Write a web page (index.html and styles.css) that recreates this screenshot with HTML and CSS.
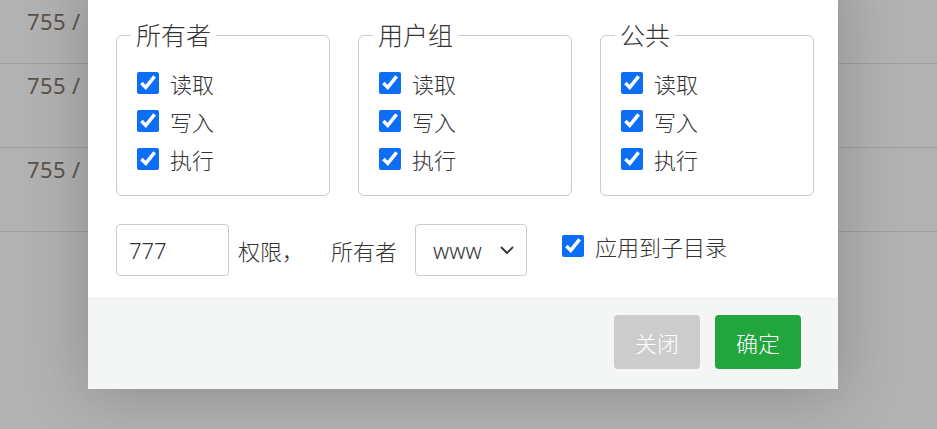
FILE: index.html
```html
<!DOCTYPE html>
<html lang="zh-CN">
<head>
    <meta charset="UTF-8">
    <title>权限设置</title>
    <link rel="stylesheet" href="styles.css">
</head>
<body>
    <div class="file-list">
        <div class="file-row">755 /</div>
        <div class="file-row">755 /</div>
        <div class="file-row">755 /</div>
    </div>
    <div class="mask"></div>

    <div class="modal">
        <div class="modal-body">
            <div class="perm-groups">
                <fieldset class="perm-box">
                    <legend>所有者</legend>
                    <label class="check"><input type="checkbox" checked><span>读取</span></label>
                    <label class="check"><input type="checkbox" checked><span>写入</span></label>
                    <label class="check"><input type="checkbox" checked><span>执行</span></label>
                </fieldset>
                <fieldset class="perm-box">
                    <legend>用户组</legend>
                    <label class="check"><input type="checkbox" checked><span>读取</span></label>
                    <label class="check"><input type="checkbox" checked><span>写入</span></label>
                    <label class="check"><input type="checkbox" checked><span>执行</span></label>
                </fieldset>
                <fieldset class="perm-box">
                    <legend>公共</legend>
                    <label class="check"><input type="checkbox" checked><span>读取</span></label>
                    <label class="check"><input type="checkbox" checked><span>写入</span></label>
                    <label class="check"><input type="checkbox" checked><span>执行</span></label>
                </fieldset>
            </div>
            <div class="perm-line">
                <input type="text" class="mode-input" value="777">
                <span class="perm-text">权限，</span>
                <span class="owner-text">所有者</span>
                <div class="owner-select">
                    <span>www</span>
                    <svg width="14" height="9" viewBox="0 0 14 9"><path d="M1.5 1.5 L7 7 L12.5 1.5" fill="none" stroke="#333" stroke-width="1.8" stroke-linecap="round" stroke-linejoin="round"/></svg>
                </div>
                <label class="check sub-dir"><input type="checkbox" checked><span>应用到子目录</span></label>
            </div>
        </div>
        <div class="modal-footer">
            <button class="btn btn-close">关闭</button>
            <button class="btn btn-ok">确定</button>
        </div>
    </div>
</body>
</html>
```
FILE: styles.css
```css
body {
    margin: 0;
    width: 937px;
    height: 429px;
    overflow: hidden;
    position: relative;
    background: #fff;
    font-family: "Noto Sans", "Noto Sans CJK SC", sans-serif;
    font-weight: 300;
    color: #333;
}

.file-row {
    height: 84px;
    border-bottom: 1px solid #e4e4e4;
    box-sizing: border-box;
    padding: 5px 0 0 27px;
    font-size: 22px;
    font-weight: 400;
    letter-spacing: 0.4px;
    line-height: 32px;
    color: #85796e;
    white-space: nowrap;
}

.file-row:first-child {
    height: 64px;
    padding-top: 5px;
}

.mask {
    position: absolute;
    top: 0; left: 0; right: 0; bottom: 0;
    background: rgba(0, 0, 0, 0.3);
}

.modal {
    position: absolute;
    left: 88px;
    top: -30px;
    width: 750px;
    height: 419px;
    background: #fff;
    box-shadow: 0 4px 60px rgba(0, 0, 0, 0.22);
    display: flex;
    flex-direction: column;
}

.modal-body {
    flex: 1;
    padding: 49px 28px 0 28px;
}

.perm-groups {
    display: flex;
    gap: 28px;
}

.perm-box {
    flex: 0 0 214px;
    width: 214px;
    min-width: 0;
    box-sizing: border-box;
    margin: 0;
    padding: 13px 20px 17px 20px;
    border: 1px solid #cccccc;
    border-radius: 6px;
    display: flex;
    flex-direction: column;
}

.perm-box legend {
    font-size: 25px;
    line-height: 32px;
    padding: 0 5px;
    margin-left: -6px;
    color: #333;
}

.check {
    display: flex;
    align-items: center;
    height: 38px;
    font-size: 22px;
    color: #333;
}

.check input {
    width: 22px;
    height: 22px;
    margin: 0 11px 0 0;
    accent-color: #0b6ef5;
}

.perm-line {
    display: flex;
    align-items: center;
    margin-top: 28px;
    height: 52px;
}

.mode-input {
    width: 113px;
    height: 52px;
    box-sizing: border-box;
    border: 1px solid #cccccc;
    border-radius: 4px;
    padding: 0 12px;
    font-family: "Noto Sans", sans-serif;
    font-weight: 300;
    font-size: 22px;
    color: #333;
    outline: none;
}

.perm-text {
    font-size: 22px;
    margin-left: 9px;
}

.owner-text {
    font-size: 22px;
    margin-left: 27px;
}

.owner-select {
    width: 112px;
    height: 52px;
    box-sizing: border-box;
    border: 1px solid #cccccc;
    border-radius: 4px;
    margin-left: 18px;
    padding: 0 12px 0 17px;
    display: flex;
    align-items: center;
    justify-content: space-between;
    font-size: 22px;
}

.sub-dir {
    margin-left: 35px;
    height: 52px;
    margin-top: -8px;
}

.modal-footer {
    height: 91px;
    box-sizing: border-box;
    background: #f4f5f5;
    border-top: 1px solid #ebeded;
    display: flex;
    justify-content: flex-end;
    align-items: flex-start;
    gap: 15px;
    padding: 16px 37px 0 0;
}

.btn {
    width: 86px;
    height: 54px;
    border: none;
    border-radius: 4px;
    color: #fff;
    font-family: "Noto Sans CJK SC", sans-serif;
    font-weight: 300;
    font-size: 22px;
    cursor: pointer;
}

.btn-close {
    background: #cccccc;
}

.btn-ok {
    background: #21a53c;
}
```
